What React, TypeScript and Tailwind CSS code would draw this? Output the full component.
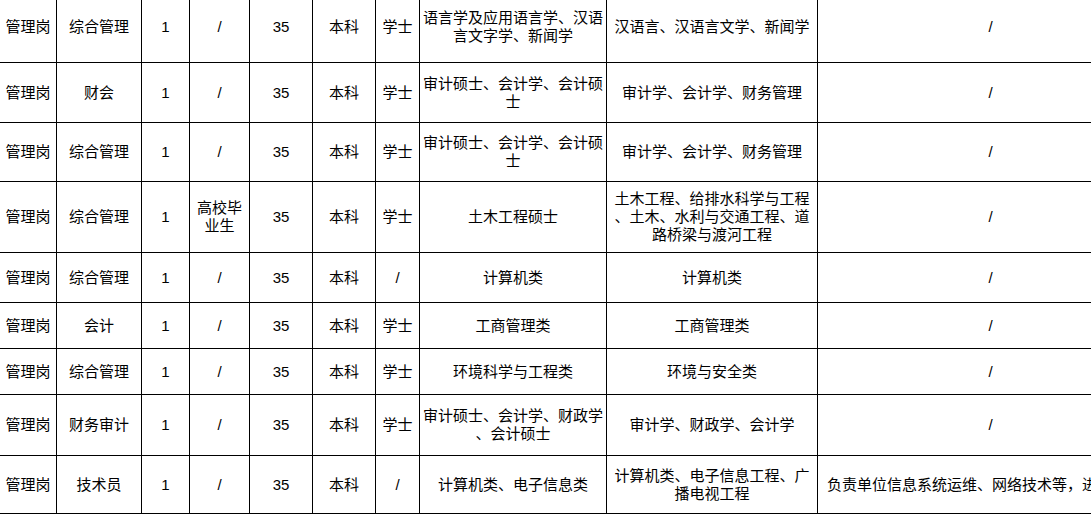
import React from "react";

const widthClasses = [
  "w-[57px]",
  "w-[85px]",
  "w-[48px]",
  "w-[60px]",
  "w-[63px]",
  "w-[63px]",
  "w-[44px]",
  "w-[187px]",
  "w-[211px]",
  "w-[346px]",
];
const heightClasses = [
  "h-[71px]",
  "h-[60px]",
  "h-[59px]",
  "h-[71px]",
  "h-[50px]",
  "h-[46px]",
  "h-[46px]",
  "h-[61px]",
  "h-[58px]",
];

type Row = string[];

const rows: Row[] = [
  ["管理岗", "综合管理", "1", "/", "35", "本科", "学士", "语言学及应用语言学、汉语言文字学、新闻学", "汉语言、汉语言文学、新闻学", "/"],
  ["管理岗", "财会", "1", "/", "35", "本科", "学士", "审计硕士、会计学、会计硕士", "审计学、会计学、财务管理", "/"],
  ["管理岗", "综合管理", "1", "/", "35", "本科", "学士", "审计硕士、会计学、会计硕士", "审计学、会计学、财务管理", "/"],
  ["管理岗", "综合管理", "1", "高校毕业生", "35", "本科", "学士", "土木工程硕士", "土木工程、给排水科学与工程、土木、水利与交通工程、道路桥梁与渡河工程", "/"],
  ["管理岗", "综合管理", "1", "/", "35", "本科", "/", "计算机类", "计算机类", "/"],
  ["管理岗", "会计", "1", "/", "35", "本科", "学士", "工商管理类", "工商管理类", "/"],
  ["管理岗", "综合管理", "1", "/", "35", "本科", "学士", "环境科学与工程类", "环境与安全类", "/"],
  ["管理岗", "财务审计", "1", "/", "35", "本科", "学士", "审计硕士、会计学、财政学、会计硕士", "审计学、财政学、会计学", "/"],
  ["管理岗", "技术员", "1", "/", "35", "本科", "/", "计算机类、电子信息类", "计算机类、电子信息工程、广播电视工程", "负责单位信息系统运维、网络技术等，进行日常维护工作"],
];

export default function App() {
  return (
    <div className="w-[1091px] h-[514px] overflow-hidden bg-white text-black font-['Liberation_Sans','Noto_Sans_CJK_SC',sans-serif]">
      <div className="-mt-[8px] flex flex-col w-[1164px]">
        {rows.map((row, ri) => (
          <div key={ri} className={"flex border-b border-black " + heightClasses[ri]}>
            {row.map((cell, ci) => {
              const isLastLong = ri === 8 && ci === 9;
              return (
                <div
                  key={ci}
                  className={
                    "shrink-0 border-r border-black flex items-center text-[15px] leading-[18px] [line-break:anywhere] " +
                    widthClasses[ci] +
                    " " +
                    (isLastLong
                      ? "justify-start pl-[9px] whitespace-nowrap overflow-hidden"
                      : "justify-center text-center px-[3px]")
                  }
                >
                  <span className={ci === 3 && cell.length > 1 ? "block w-[45px]" : ""}>{cell}</span>
                </div>
              );
            })}
          </div>
        ))}
      </div>
    </div>
  );
}
